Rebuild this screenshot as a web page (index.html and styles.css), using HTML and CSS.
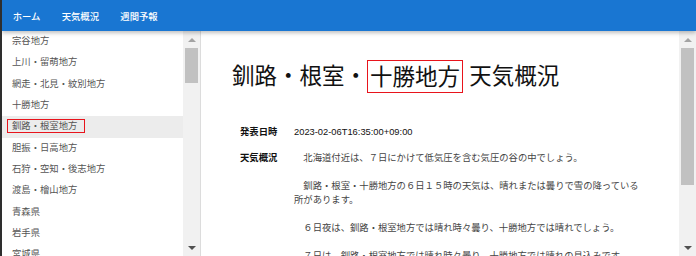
FILE: index.html
```html
<!DOCTYPE html>
<html lang="ja">
  <head>
    <meta charset="UTF-8">
    <meta name="viewport" content="width=device-width, initial-scale=1">
    <title>天気概況</title>
    <link rel="stylesheet" href="styles.css">
  </head>
  <body>
    <nav class="app-bar">
      <a class="app-bar-link" href="#">ホーム</a>
      <a class="app-bar-link" href="#">天気概況</a>
      <a class="app-bar-link" href="#">週間予報</a>
    </nav>
    <div class="layout">
      <div class="pane pane-side">
        <aside class="pane-body area-list">
          <ul>
            <li>宗谷地方</li>
            <li>上川・留萌地方</li>
            <li>網走・北見・紋別地方</li>
            <li>十勝地方</li>
            <li class="selected"><span class="mark mark-small">釧路・根室地方</span></li>
            <li>胆振・日高地方</li>
            <li>石狩・空知・後志地方</li>
            <li>渡島・檜山地方</li>
            <li>青森県</li>
            <li>岩手県</li>
            <li>宮城県</li>
            <li>秋田県</li>
            <li>山形県</li>
            <li>福島県</li>
            <li>茨城県</li>
            <li>栃木県</li>
            <li>群馬県</li>
            <li>埼玉県</li>
            <li>千葉県</li>
            <li>東京都</li>
            <li>神奈川県</li>
            <li>新潟県</li>
            <li>富山県</li>
            <li>石川県</li>
            <li>福井県</li>
            <li>山梨県</li>
            <li>長野県</li>
            <li>岐阜県</li>
            <li>静岡県</li>
            <li>愛知県</li>
            <li>三重県</li>
            <li>滋賀県</li>
            <li>京都府</li>
            <li>大阪府</li>
            <li>兵庫県</li>
            <li>奈良県</li>
            <li>和歌山県</li>
            <li>鳥取県</li>
            <li>島根県</li>
            <li>岡山県</li>
            <li>広島県</li>
            <li>山口県</li>
            <li>徳島県</li>
            <li>香川県</li>
            <li>愛媛県</li>
            <li>高知県</li>
            <li>福岡県</li>
            <li>佐賀県</li>
            <li>長崎県</li>
            <li>熊本県</li>
            <li>大分県</li>
            <li>宮崎県</li>
            <li>奄美地方</li>
            <li>鹿児島県</li>
            <li>沖縄本島地方</li>
            <li>大東島地方</li>
            <li>宮古島地方</li>
            <li>八重山地方</li>
          </ul>
        </aside>
        <div class="scrollbar">
          <span class="scrollbar-button"><i class="arrow-up"></i></span>
          <span class="scrollbar-track"><span class="scrollbar-thumb thumb-side"></span></span>
          <span class="scrollbar-button"><i class="arrow-down"></i></span>
        </div>
      </div>
      <div class="pane pane-main">
        <main class="pane-body overview">
          <h1 class="overview-title">釧路・根室・<span class="mark mark-title">十勝地方</span> 天気概況</h1>
          <dl class="overview-table">
            <dt>発表日時</dt>
            <dd class="overview-date">2023-02-06T16:35:00+09:00</dd>
            <dt>天気概況</dt>
            <dd class="overview-text">　北海道付近は、７日にかけて低気圧を含む気圧の谷の中でしょう。

　釧路・根室・十勝地方の６日１５時の天気は、晴れまたは曇りで雪の降っている所があります。

　６日夜は、釧路・根室地方では晴れ時々曇り、十勝地方では晴れでしょう。

　７日は、釧路・根室地方では晴れ時々曇り、十勝地方では晴れの見込みです。

　海上では、７日にかけて波が高いでしょう。</dd>
          </dl>
        </main>
        <div class="scrollbar">
          <span class="scrollbar-button"><i class="arrow-up"></i></span>
          <span class="scrollbar-track"><span class="scrollbar-thumb thumb-main"></span></span>
          <span class="scrollbar-button"><i class="arrow-down"></i></span>
        </div>
      </div>
    </div>
  </body>
</html>
```

FILE: styles.css
```css
html, body {
  height: 100%;
  margin: 0;
}

body {
  display: flex;
  flex-direction: column;
  box-sizing: border-box;
  border-left: 2px solid #2e2e2e;
  font-family: "Liberation Sans", "Noto Sans CJK JP", sans-serif;
  font-size: 9.33px;
  color: #333;
  background-color: white;
  overflow: hidden;
}

.app-bar {
  display: flex;
  align-items: center;
  flex: 0 0 31px;
  background-color: #1976d2;
  box-shadow: 0 2px 4px rgba(0, 0, 0, 0.25);
  position: relative;
  z-index: 1;
}

.app-bar-link {
  padding: 0 10.67px;
  color: white;
  font-weight: 500;
  text-decoration: none;
}

.layout {
  display: flex;
  flex: 1;
  min-height: 0;
}

/* pane = scrolling body + drawn scrollbar */
.pane {
  display: flex;
  min-width: 0;
}

.pane-body {
  flex: 1;
  min-width: 0;
  overflow: hidden;
}

.pane-side {
  flex: 0 0 198px;
  border-right: 1px solid #dcdcdc;
}

.pane-main {
  flex: 1;
}

.scrollbar {
  display: flex;
  flex-direction: column;
  flex: 0 0 17px;
  background-color: #f1f1f1;
}

.scrollbar-button {
  display: flex;
  align-items: center;
  justify-content: center;
  flex: 0 0 17px;
}

.scrollbar-track {
  flex: 1;
  padding: 0 2px;
}

.scrollbar-thumb {
  display: block;
  background-color: #c1c1c1;
}

.thumb-side {
  height: 35px;
}

.thumb-main {
  height: 137px;
}

.arrow-up, .arrow-down {
  width: 0;
  height: 0;
  border-left: 4px solid transparent;
  border-right: 4px solid transparent;
}

.arrow-up {
  border-bottom: 4px solid #a3a3a3;
}

.arrow-down {
  border-top: 4px solid #505050;
}

.area-list ul {
  list-style: none;
  margin: 0;
  padding: 0;
}

.area-list li {
  padding: 4px 10px;
  line-height: 13.33px;
  color: #555;
  white-space: nowrap;
}

.area-list li.selected {
  background-color: #ececec;
}

.mark {
  border: 1px solid #e8141c;
  padding: 0 2px;
}

.mark-small {
  padding: 1px 7px 1px 4px;
  margin: 0 -8px 0 -5px;
}

.mark-title {
  padding: 3.5px 2px 3px;
}

.overview {
  padding: 29px 34px 46px 31px;
}

.overview-title {
  margin: 0 0 31.5px;
  font-size: 22.5px;
  font-weight: normal;
  line-height: 33px;
  color: #111;
  white-space: nowrap;
}

.overview-table {
  display: grid;
  grid-template-columns: 54px 1fr;
  row-gap: 12.8px;
  margin: 0 0 0 8px;
  line-height: 14px;
}

.overview-table dt {
  font-weight: bold;
  color: #111;
}

.overview-table dd {
  margin: 0;
}

.overview-date {
  color: #111;
}

.overview-text {
  white-space: pre-wrap;
  color: #444;
}
```
